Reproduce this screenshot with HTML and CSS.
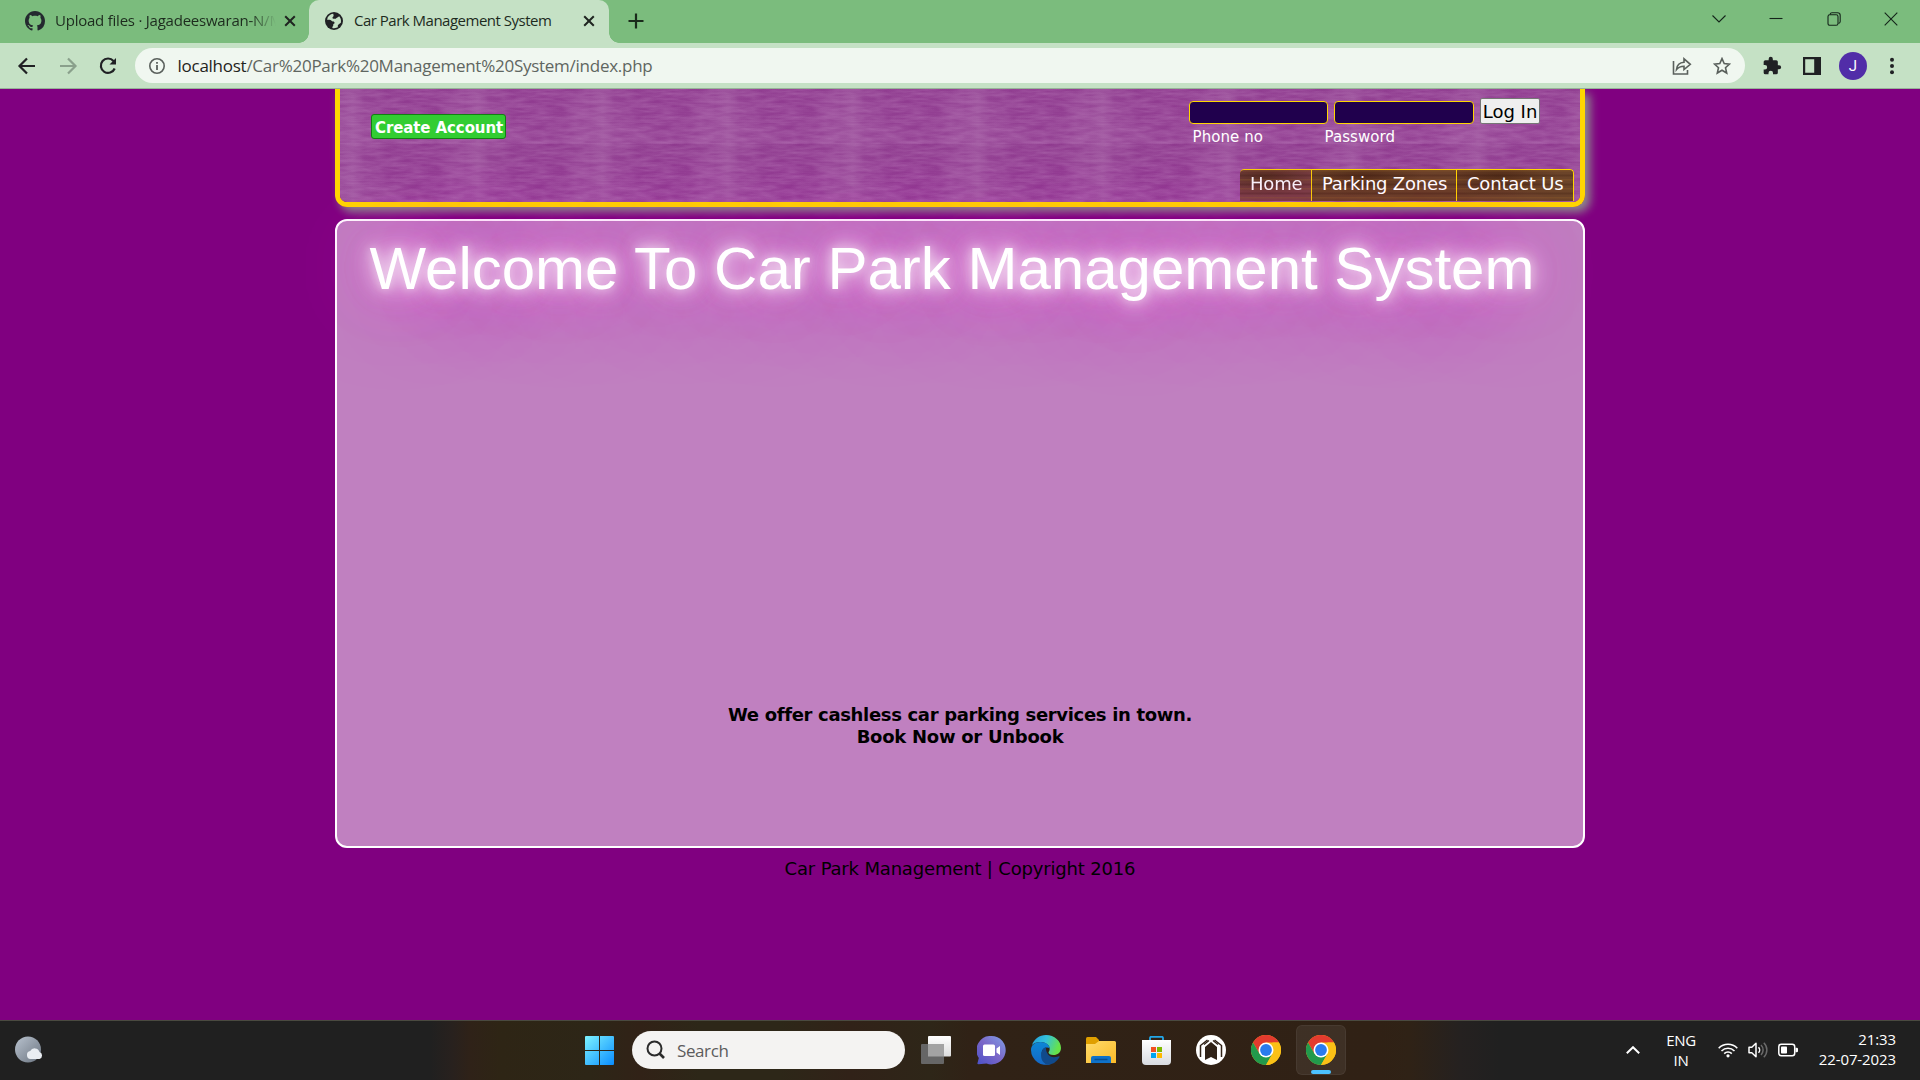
FILE: index.html
```html
<!DOCTYPE html>
<html lang="en">
<head>
<meta charset="utf-8">
<title>Car Park Management System</title>
<link rel="stylesheet" href="styles.css">
</head>
<body>
<div class="tabstrip">
  <div class="tab tab-idle">
    <svg class="favicon" width="20" height="20" viewBox="0 0 16 16" fill="#24292f"><path d="M8 0C3.58 0 0 3.58 0 8c0 3.54 2.29 6.53 5.47 7.59.4.07.55-.17.55-.38 0-.19-.01-.82-.01-1.49-2.01.37-2.53-.49-2.69-.94-.09-.23-.48-.94-.82-1.13-.28-.15-.68-.52-.01-.53.63-.01 1.08.58 1.23.82.72 1.21 1.87.87 2.33.66.07-.52.28-.87.51-1.07-1.78-.2-3.64-.89-3.64-3.95 0-.87.31-1.59.82-2.15-.08-.2-.36-1.02.08-2.12 0 0 .67-.21 2.2.82.64-.18 1.32-.27 2-.27s1.36.09 2 .27c1.53-1.04 2.2-.82 2.2-.82.44 1.1.16 1.92.08 2.12.51.56.82 1.27.82 2.15 0 3.07-1.87 3.75-3.65 3.95.29.25.54.73.54 1.48 0 1.07-.01 1.93-.01 2.2 0 .21.15.46.55.38A8.01 8.01 0 0 0 16 8c0-4.42-3.58-8-8-8z"/></svg>
    <span class="tab-title faded">Upload files · Jagadeeswaran-N/M</span>
    <svg class="tab-close" width="12" height="12" viewBox="0 0 12 12" stroke="#1f2420" stroke-width="2"><path d="M1.200 1.200l9.600 9.600M10.800 1.200L1.200 10.800"/></svg>
  </div>
  <div class="tab tab-active">
    <svg class="favicon" width="18" height="18" viewBox="0 0 18 18"><circle cx="9" cy="9" r="9" fill="#202124"/><path d="M8.200 1.800C6.400 2 4 3 2.600 5.600L2.200 8c1.800-.4 3.600 0 4.300.8.8.9 2 .5 2.700 1.100.9.800.2 1.900-.9 2.100v1.300c0 .8-1 1-1 2.600 2 .6 4.500 0 5.700-.9-.6-1-.1-2 .9-2.700.6-.8 1.600-1.200 2-1.600.4-2.700-.2-4.600-1.700-6.400-.6 0-.8 1.200-2 1.300l-1 .6c-.3 1-1.700.5-2.700.6C7.400 6.700 7 5.500 8 4.700c1-.5.6-1.600.2-2.900z" fill="#c5e1c5"/></svg>
    <span class="tab-title tight">Car Park Management System</span>
    <svg class="tab-close" width="12" height="12" viewBox="0 0 12 12" stroke="#1f2420" stroke-width="2"><path d="M1.200 1.200l9.600 9.600M10.800 1.200L1.200 10.800"/></svg>
  </div>
  <svg class="new-tab" width="16" height="16" viewBox="0 0 16 16" stroke="#1a2b1b" stroke-width="2.200"><path d="M8 .5v15M.5 8h15"/></svg>
  <div class="window-controls">
    <svg width="14" height="14" viewBox="0 0 14 14"><path d="M.5 3.500L7 10l6.500-6.500"/></svg>
    <svg width="14" height="14" viewBox="0 0 14 14"><path d="M.5 6.500h13"/></svg>
    <svg width="14" height="14" viewBox="0 0 14 14"><rect x="1" y="2.800" width="10" height="10.500" rx="1.800"/><path d="M3 2.500Q3.500.8 5 .8h5.500q2.700 0 2.700 2.700V9.500q0 1.500-1.700 2"/></svg>
    <svg width="14" height="14" viewBox="0 0 14 14"><path d="M.7.7l12.600 12.600M13.300.7L.7 13.300"/></svg>
  </div>
</div>

<div class="toolbar">
  <div class="nav-buttons">
    <svg width="20" height="20" viewBox="0 0 20 20" stroke="#202124"><path d="M18 10H3M10 2.500L2.500 10l7.500 7.500"/></svg>
    <svg width="20" height="20" viewBox="0 0 20 20" stroke="#8aa08c"><path d="M2 10h15M10 2.500l7.500 7.500-7.500 7.500"/></svg>
    <svg width="20" height="20" viewBox="0 0 20 20" stroke="#202124"><path d="M16.700 12.500A7.200 7.200 0 1 1 15.500 5L17 6.800"/><path d="M18 2v6.500h-6.500z" fill="#202124" stroke="none"/></svg>
  </div>
  <div class="omnibox">
    <svg width="16" height="16" viewBox="0 0 16 16" fill="none" stroke="#5f6368" stroke-width="1.600"><circle cx="8" cy="8" r="7.200"/><path d="M8 7v5M8 4v1.700" stroke-width="1.800"/></svg>
    <span class="url"><b>localhost</b>/Car%20Park%20Management%20System/index.php</span>
    <svg class="share" width="20" height="20" viewBox="0 0 20 20"><path d="M1.500 5v13h14v-4"/><path d="M4.500 13.500C5 9 8 6.500 12 6.300V2.800L18.300 8.300 12 13.500V10.200C8.500 10.200 6.500 11 4.500 13.500z"/></svg>
    <svg width="18" height="18" viewBox="0 0 18 18"><path d="M9 1.600l2.200 5 5.300.5-4 3.600 1.200 5.300L9 13.200 4.300 16l1.200-5.300-4-3.600 5.300-.5z"/></svg>
  </div>
  <div class="actions">
    <svg width="20" height="20" viewBox="0 0 24 24" fill="#202124"><path d="M20.500 11H19V7a2 2 0 0 0-2-2h-4V3.500a2.500 2.500 0 0 0-5 0V5H4a2 2 0 0 0-2 2v3.800h1.500a2.700 2.700 0 0 1 0 5.400H2V20a2 2 0 0 0 2 2h3.800v-1.500a2.700 2.700 0 0 1 5.400 0V22H17a2 2 0 0 0 2-2v-4h1.500a2.500 2.500 0 0 0 0-5z"/></svg>
    <svg width="18" height="18" viewBox="0 0 18 18" fill="#202124"><path fill-rule="evenodd" d="M0 0h18v18H0zM2.200 2.200v13.600h9V2.200z"/></svg>
    <span class="avatar">J</span>
    <svg width="6" height="18" viewBox="0 0 6 18" fill="#202124"><circle cx="3" cy="2.700" r="2"/><circle cx="3" cy="9" r="2"/><circle cx="3" cy="15.300" r="2"/></svg>
  </div>
</div>

<main class="page">
  <header class="banner">
    <svg class="weave" width="1240" height="113">
      <defs>
        <filter id="grain" x="0" y="0" width="100%" height="100%">
          <feTurbulence type="fractalNoise" baseFrequency="0.045 0.25" numOctaves="3" seed="8" stitchTiles="stitch"/>
          <feColorMatrix values="0 0 0 0 0.72  0 0 0 0 0.45  0 0 0 0 0.72  0.400 0 0 0 -0.1"/>
        </filter>
        <linearGradient id="fold">
          <stop offset="0" stop-color="#c9a0c9" stop-opacity=".14"/>
          <stop offset=".1" stop-color="#c9a0c9" stop-opacity=".24"/>
          <stop offset=".2" stop-color="#c9a0c9" stop-opacity=".09"/>
          <stop offset=".6" stop-color="#c9a0c9" stop-opacity="0"/>
          <stop offset=".85" stop-color="#c9a0c9" stop-opacity=".07"/>
          <stop offset="1" stop-color="#c9a0c9" stop-opacity=".14"/>
        </linearGradient>
        <linearGradient id="dip" x2="0" y2="1">
          <stop offset="0" stop-color="#802a80" stop-opacity=".2"/>
          <stop offset=".5" stop-color="#802a80" stop-opacity=".04"/>
          <stop offset="1" stop-color="#b070b0" stop-opacity=".15"/>
        </linearGradient>
        <pattern id="tile" x="0" y="-4" width="125" height="59" patternUnits="userSpaceOnUse">
          <rect width="125" height="59" fill="#913c91"/>
          <rect width="125" height="59" fill="url(#fold)"/>
          <rect width="125" height="59" fill="url(#dip)"/>
          <rect width="125" height="59" filter="url(#grain)"/>
        </pattern>
      </defs>
      <rect width="1240" height="113" fill="url(#tile)"/>
    </svg>
    <a class="create">Create Account</a>
    <div class="side">
      <form class="login">
        <input type="text" class="phone"><input type="password" class="secret"><button type="button">Log In</button>
      </form>
      <div class="labels"><span>Phone no</span><span>Password</span></div>
      <nav class="menu"><a class="current">Home</a><a>Parking Zones</a><a>Contact Us</a></nav>
    </div>
  </header>
  <section class="card">
    <h1>Welcome To Car Park Management System</h1>
    <p>We offer cashless car parking services in town.<br><span>Book Now or Unbook</span></p>
  </section>
  <footer>Car Park Management | Copyright 2016</footer>
</main>

<div class="taskbar">
  <div class="weather">
    <svg width="28" height="28" viewBox="0 0 28 28"><defs><linearGradient id="moon" x2="1" y2="1"><stop stop-color="#b9c3cf"/><stop offset="1" stop-color="#6b7480"/></linearGradient></defs><circle cx="13" cy="13.500" r="13" fill="url(#moon)"/><path d="M15.500 23a4 4 0 0 1-.3-7.900 5 5 0 0 1 9.300 1A3.600 3.600 0 0 1 24.500 23z" fill="#e9edf2"/></svg>
  </div>
  <div class="start">
    <svg width="29" height="29" viewBox="0 0 29 29"><defs><linearGradient id="win" gradientUnits="userSpaceOnUse" x1="0" y1="0" x2="29" y2="29"><stop stop-color="#7df3ff"/><stop offset="1" stop-color="#0a8dff"/></linearGradient></defs><path fill="url(#win)" d="M1 0h13v14H0V1q0-1 1-1zM15 0h13q1 0 1 1v13H15zM0 15h14v14H1q-1 0-1-1zM15 15h14v13q0 1-1 1H15z"/></svg>
  </div>
  <div class="search">
    <svg width="20" height="20" viewBox="0 0 20 20" fill="none" stroke="#2b2b2b" stroke-width="2"><circle cx="8.500" cy="8.500" r="7"/><path d="M13.500 13.500l4.500 4.500" stroke-width="2.600"/></svg>
    <span>Search</span>
  </div>
  <div class="apps">
    <span class="app"><svg width="30" height="28" viewBox="0 0 30 28"><defs><linearGradient id="tv" x2="0" y2="1"><stop stop-color="#fff"/><stop offset="1" stop-color="#dcdcdc"/></linearGradient></defs><rect x="7" width="23" height="20.500" rx="1" fill="url(#tv)"/><rect y="8" width="23" height="20" rx="1" fill="#666"/><path d="M7 8h16v12.500H7z" fill="#a3a3a3"/></svg></span>
    <span class="app"><svg width="29" height="29" viewBox="0 0 29 29"><defs><linearGradient id="chat" x1="1" x2="0" y2="1"><stop stop-color="#7fa0e8"/><stop offset=".5" stop-color="#7b67c8"/><stop offset="1" stop-color="#4a50c8"/></linearGradient></defs><path d="M14.500 0a14.200 14.200 0 1 1-5 27.500L1.500 28.300Q0 28.300.5 27l1.300-5A14.200 14.200 0 0 1 14.500 0z" fill="url(#chat)"/><rect x="6" y="8.500" width="12" height="11.500" rx="1.500" fill="#fff"/><path d="M19.500 12.500l3.500-2.500v9l-3.500-2.500z" fill="#fff"/></svg></span>
    <span class="app"><svg width="30" height="30" viewBox="0 0 30 30"><defs><linearGradient id="e1" x2="1" y2=".3"><stop stop-color="#1f9bdc"/><stop offset=".5" stop-color="#34c1dc"/><stop offset="1" stop-color="#66e24a"/></linearGradient><linearGradient id="e2" x2="0" y2="1"><stop stop-color="#0c86d6"/><stop offset="1" stop-color="#1567c4"/></linearGradient></defs><path d="M1 10C3 4 8.500 0 15 0c8.500 0 15 6 15 13 0 4.500-3.500 7-7.500 7-3.500 0-5-1.500-5-2.500s1.200-1.300 1.200-3.800C18.700 10 14.500 7 9.500 7 6 7 3 8 1 10z" fill="url(#e1)"/><path d="M0 15C0 10 4 7 9.500 7c5.500 0 9.200 3 9.200 6.500C17 11.800 12.500 12 11 16c-1.800 6 3.500 12.500 9 13A15 15 0 0 1 0 15z" fill="url(#e2)"/><path d="M11 16c1-2.700 2.500-3.300 4-3.700-.5 5 3 10 8 10 2.500 0 4-.8 5-1 .8 0 .7.700.3 1.200A15 15 0 0 1 17 29.800C10 28 9 21 11 16z" fill="#114a8b"/></svg></span>
    <span class="app"><svg width="30" height="27" viewBox="0 0 30 27"><defs><linearGradient id="fd" x2="1" y2="1"><stop stop-color="#ffdb6b"/><stop offset="1" stop-color="#fbbb28"/></linearGradient></defs><path d="M0 1.500Q0 0 1.500 0H10l3 3v5H0z" fill="#e09f00"/><path d="M0 7h9l4-3h15.500Q30 4 30 5.500V26H0z" fill="url(#fd)"/><path d="M5 26v-5q0-2 2-2h16q2 0 2 2v5z" fill="#0f72c9"/><path d="M8.500 22.500h13" stroke="#084f91" stroke-width="1.500"/></svg></span>
    <span class="app"><svg width="29" height="29" viewBox="0 0 29 29"><defs><linearGradient id="bag" x2="0" y2="1"><stop stop-color="#fff"/><stop offset="1" stop-color="#d8dbe0"/></linearGradient></defs><path d="M8 5V2q0-1.200 1.200-1.200h10.600Q21 .8 21 2v3" fill="none" stroke="#22a7e8" stroke-width="1.800"/><path d="M0 4h29v21q0 4-4 4H4q-4 0-4-4z" fill="url(#bag)"/><path d="M9 11h5v5H9z" fill="#f25022"/><path d="M15 11h5v5h-5z" fill="#7fba00"/><path d="M9 17h5v5H9z" fill="#00a4ef"/><path d="M15 17h5v5h-5z" fill="#ffb900"/></svg></span>
    <span class="app"><svg width="30" height="30" viewBox="0 0 30 30"><circle cx="15" cy="15" r="15" fill="#fff"/><g fill="none" stroke="#302217"><path d="M4.500 22V10.500L11.500 5" stroke-width="1.500"/><path d="M25.500 22V10.500L18.500 5" stroke-width="1.500"/><path d="M8 9.500L13 5.500M22 9.500L17 5.500" stroke-width="1.300"/></g><path d="M9 25V12L15 7l6 5v13L15 22z" fill="#302217"/></svg></span>
    <span class="app"><svg width="30" height="30" viewBox="0 0 30 30"><g id="chrome"><circle cx="15" cy="15" r="15" fill="#fbc116"/><path d="M2 7.500a15 15 0 0 1 26 0H15l-6.500 11.250z" fill="#e33b2e"/><path d="M2 7.500A15 15 0 0 0 15 30l6.500-11.250H8.500z" fill="#229a4c"/><path d="M15 30l6.500-11.250V7.500H28A15 15 0 0 1 15 30z" fill="#fbc116"/><circle cx="15" cy="15" r="7.500" fill="#fff"/><circle cx="15" cy="15" r="5.900" fill="#2a7bee"/></g></svg></span>
    <span class="app running"><svg width="30" height="30" viewBox="0 0 30 30"><use href="#chrome"/></svg></span>
  </div>
  <div class="tray">
    <svg width="14" height="8" viewBox="0 0 14 8" fill="none" stroke="#fff" stroke-width="2"><path d="M.8 7.200L7 1.200l6.200 6"/></svg>
    <span class="lang">ENG<br>IN</span>
    <svg class="wifi" width="20" height="16" viewBox="0 0 20 16" fill="none" stroke="#fff" stroke-width="1.600"><path d="M.7 6.200a13 13 0 0 1 18.600 0M3.500 9a9.200 9.200 0 0 1 13 0M6.200 11.600a5.400 5.400 0 0 1 7.600 0"/><circle cx="10" cy="13.800" r="1.600" fill="#fff" stroke="none"/></svg>
    <svg class="sound" width="20" height="18" viewBox="0 0 20 18" fill="none" stroke="#fff" stroke-width="1.500"><path d="M1 6.200h2.800L8 2.200v13.600L3.800 11.800H1z" stroke-linejoin="round"/><path d="M10.500 6.200a4 4 0 0 1 0 5.600"/><path d="M13 4a7 7 0 0 1 0 10M15.800 1.800a10 10 0 0 1 0 14.400" stroke="#6a6a6a"/></svg>
    <svg class="battery" width="20" height="14" viewBox="0 0 20 14"><rect x=".8" y="1.200" width="15.900" height="11.600" rx="2.500" fill="none" stroke="#fff" stroke-width="1.500"/><rect x="3" y="3.500" width="6" height="7" rx=".8" fill="#fff"/><path d="M17.500 4.800h1.200q1.300 0 1.300 1.200v2q0 1.200-1.300 1.200h-1.200z" fill="#fff"/></svg>
    <span class="clock">21:33<br>22-07-2023</span>
  </div>
</div>
</body>
</html>
```
FILE: styles.css
```css
* { box-sizing: border-box; }
svg { display: block; flex: none; }
body {
  margin: 0;
  width: 1920px;
  height: 1080px;
  overflow: hidden;
  display: flex;
  flex-direction: column;
  background: #800080;
  font-family: "Open Sans", sans-serif;
}

/* Browser tabs */
.tabstrip {
  flex: none;
  height: 43px;
  display: flex;
  align-items: center;
  background: #7bbc7d;
}
.tab {
  display: flex;
  align-items: center;
  height: 43px;
  padding-bottom: 1px;
  font-size: 15px;
  color: #1d2b1e;
}
.tab-idle { width: 309px; padding-left: 25px; }
.tab-active {
  position: relative;
  width: 300px;
  padding-left: 16px;
  background: #c5e1c5;
  border-radius: 10px 10px 0 0;
}
.tab-active::before, .tab-active::after {
  content: "";
  position: absolute;
  bottom: 0;
  width: 10px;
  height: 10px;
}
.tab-active::before { left: -10px; background: radial-gradient(circle at 0 0, transparent 9.500px, #c5e1c5 10px); }
.tab-active::after { right: -10px; background: radial-gradient(circle at 100% 0, transparent 9.500px, #c5e1c5 10px); }
.tab-title {
  width: 221px;
  margin: 0 0 2px 10px;
  white-space: nowrap;
  line-height: 20px;
  letter-spacing: -.23px;
}
.tab-title.tight { margin-left: 11px; letter-spacing: -.5px; }
.faded { -webkit-mask: linear-gradient(90deg, #000 195px, transparent 221px); mask: linear-gradient(90deg, #000 195px, transparent 221px); }
.tab-close { margin-left: 8px; }
.new-tab { margin: 0 0 1px 19px; }
.window-controls {
  margin: 0 22px 6px auto;
  display: flex;
  gap: 43.500px;
}
.window-controls svg { fill: none; stroke: #14241a; stroke-width: 1.100; }

/* Address bar */
.toolbar {
  flex: none;
  height: 46px;
  display: flex;
  align-items: center;
  background: #c5e1c5;
  border-bottom: 1px solid #97b398;
}
.nav-buttons { width: 135px; padding-left: 17px; display: flex; gap: 20.500px; }
.nav-buttons svg { fill: none; stroke-width: 2.200; }
.omnibox {
  width: 1610px;
  height: 35px;
  border-radius: 18px;
  padding: 0 14px;
  display: flex;
  align-items: center;
  background: #f0f7f0;
}
.omnibox svg { fill: none; stroke: #5a605c; stroke-width: 1.600; }
.url {
  margin-left: 12.500px;
  font-size: 17px;
  line-height: 24px;
  letter-spacing: -.26px;
  color: #5f6661;
}
.url b { font-weight: 400; color: #1f2320; }
.share { margin: 0 21px 0 auto; }
.actions { display: flex; align-items: center; padding-left: 17px; }
.actions svg:nth-child(2) { margin: 0 4px 0 21px; }
.actions svg:last-child { margin-left: 22px; }
.avatar {
  margin-left: 14px;
  width: 28px;
  height: 28px;
  border-radius: 50%;
  background: #512da8;
  color: #fff;
  font: 15px/28px Roboto, sans-serif;
  text-align: center;
}

/* Page content */
.page {
  flex: 1;
  min-height: 0;
  overflow: hidden;
  display: flex;
  flex-direction: column;
  align-items: center;
  font-family: "DejaVu Sans", Verdana, sans-serif;
  font-size: 18px;
}
.banner {
  flex: none;
  position: relative;
  width: 1250px;
  height: 118px;
  display: flex;
  justify-content: space-between;
  align-items: flex-start;
  border: 5px solid #ffd700;
  border-top: 0;
  border-radius: 0 0 12px 12px;
  box-shadow: 5px 5px 10px #8c908c;
}
.weave {
  position: absolute;
  inset: 0;
  border-radius: 0 0 7px 7px;
}
.create {
  position: relative;
  margin: 25px 0 0 31px;
  width: 135px;
  height: 25px;
  border: 1px solid #128012;
  border-radius: 3px;
  padding-left: 3px;
  background: #32cd32;
  color: #fff;
  font-size: 15px;
  font-weight: 700;
  line-height: 26px;
  letter-spacing: -.1px;
  white-space: nowrap;
}
.side {
  position: relative;
  width: 391px;
  height: 113px;
  display: flex;
  flex-direction: column;
}
.login { display: flex; align-items: flex-end; height: 35px; }
.login input {
  height: 23px;
  padding: 0;
  border: 1px solid #ffd700;
  border-radius: 4px;
  background: #20004d;
}
.phone { width: 139px; margin-right: 6px; }
.secret { width: 140px; margin-right: 6px; }
.login button {
  width: 60px;
  height: 26px;
  padding: 1px 0 0;
  border: 1px solid #767676;
  border-radius: 2px;
  background: #efefef;
  font: 18px/24px "DejaVu Sans", Verdana, sans-serif;
  white-space: nowrap;
}
.labels {
  display: flex;
  padding: 3px 0 0 3.500px;
  color: #fff;
  font-size: 15px;
  line-height: 20px;
  letter-spacing: .08px;
}
.labels span:first-child { width: 132px; }
.menu {
  display: flex;
  align-self: flex-end;
  margin: 22px 6px 0 0;
  height: 32px;
  width: 334px;
  border-radius: 4px 4px 0 0;
  overflow: hidden;
  line-height: 28px;
  color: #fff;
}
.menu a {
  border: 1px solid #ffd700;
  border-width: 1px 1px 0 0;
  padding: 0 0 0 10px;
  letter-spacing: -.2px;
  white-space: nowrap;
  background:
    repeating-linear-gradient(180deg, rgba(150, 100, 40, .3) 0 1px, transparent 2px 4px, rgba(40, 15, 5, .2) 5px 6px, transparent 7px 9px),
    radial-gradient(60px 20px at 35% 20%, #54301a, transparent),
    #6b4529;
}
.menu a:nth-child(1) { width: 72px; background-color: #7b4342; opacity: .94; border-radius: 4px 0 0 0; }
.menu a:nth-child(2) { width: 145px; }
.menu a:nth-child(3) { width: 117px; border-radius: 0 4px 0 0; }
.card {
  flex: none;
  width: 1250px;
  height: 629px;
  margin-top: 12px;
  border: 2px solid #fff;
  border-radius: 12px;
  background: rgba(255, 255, 255, .5);
}
.card h1 {
  position: relative;
  margin: 13px 0 0 32.500px;
  font: 400 60px/69px "Liberation Sans", Arial, sans-serif;
  color: #fff;
  white-space: nowrap;
  text-shadow:
    0 0 10px rgba(255, 255, 255, .5),
    0 0 20px #fff,
    0 0 30px rgba(255, 255, 255, .5),
    0 0 50px rgba(255, 90, 240, .8),
    0 0 75px rgba(255, 50, 220, .8),
    0 0 100px rgba(255, 30, 225, .6);
}
.card p {
  margin: 401px 0 0;
  text-align: center;
  font-weight: 700;
  line-height: 22px;
  letter-spacing: -.33px;
}
.card p span { letter-spacing: -.27px; }
.page footer {
  margin-top: 10px;
  line-height: 22px;
  letter-spacing: -.17px;
}

/* Windows taskbar */
.taskbar {
  flex: none;
  height: 60px;
  display: flex;
  align-items: center;
  border-top: 1px solid #4a4a40;
  padding-bottom: 1px;
  color: #fff;
  background: linear-gradient(90deg, #202020 430px, #28211e 452px, #2f2218 470px, #2e2515 500px, #2d2617 590px, #312217 640px, #2d2718 700px, #2d2718 780px, #312218 850px, #2e2618 930px, #302216 970px, #302115 1380px, #2f2216 1410px, #252120 1460px, #202020 1500px);
}
.weather { width: 585px; padding: 0 0 0 14.500px; }
.start { width: 47px; }
.search {
  width: 273px;
  height: 38px;
  border-radius: 19px;
  padding-left: 14px;
  display: flex;
  align-items: center;
  background: #f4f3f2;
  color: #5c5c5c;
  font-size: 17px;
  letter-spacing: -.4px;
}
.search span { margin: 1px 0 0 11px; line-height: 22px; }
.apps { display: flex; margin-left: 6px; }
.app {
  position: relative;
  width: 50px;
  height: 50px;
  margin-right: 5px;
  display: flex;
  align-items: center;
  justify-content: center;
}
.running {
  background: rgba(255, 255, 255, .07);
  border-radius: 6px;
  box-shadow: inset 0 0 0 1px rgba(255, 255, 255, .05);
}
.running::after {
  content: "";
  position: absolute;
  bottom: 1px;
  left: 15px;
  width: 20px;
  height: 4px;
  border-radius: 2px;
  background: #4cc2ff;
}
.tray {
  margin-left: auto;
  padding-right: 24px;
  display: flex;
  align-items: center;
  font-size: 15px;
  line-height: 20px;
}
.lang { width: 40px; margin: 0 0 1px 21px; text-align: center; letter-spacing: -.3px; }
.wifi { margin-left: 17px; }
.sound { margin-left: 10px; }
.battery { margin-left: 10px; }
.clock { width: 98px; margin-bottom: 3px; text-align: right; letter-spacing: -.1px; }
```
